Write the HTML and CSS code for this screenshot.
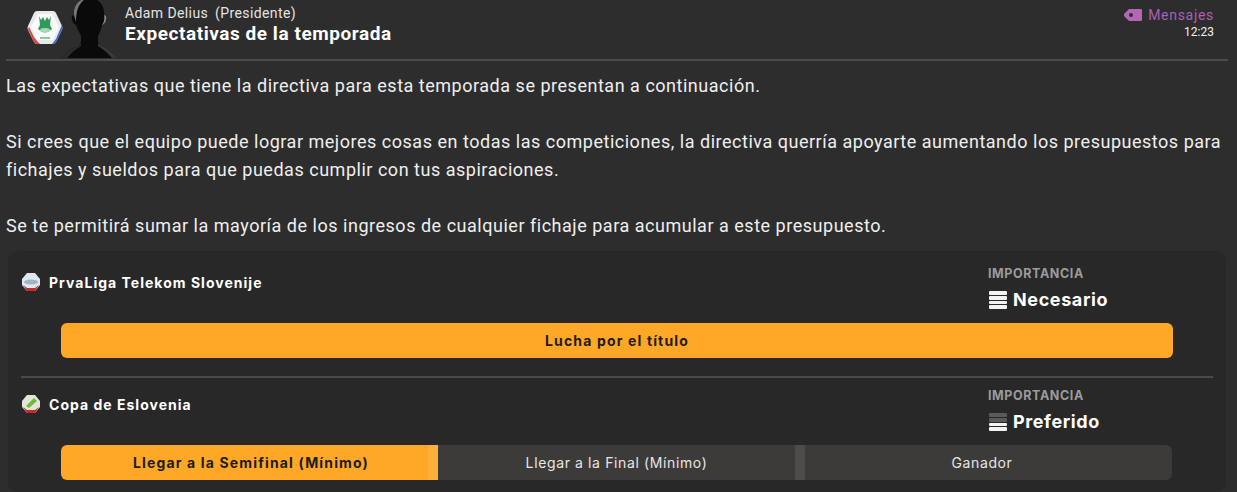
FILE: index.html
```html
<!DOCTYPE html>
<html lang="es">
<head>
    <meta charset="UTF-8">
    <title>Expectativas de la temporada</title>
    <link rel="stylesheet" href="styles.css">
</head>
<body>
    <header class="msg-header">
        <svg class="club-crest" width="36" height="35" viewBox="0 0 36 35">
            <path d="M10 1 H26 Q28 1 29 3 L35 16 Q36 18 35 20 L29 32 Q28 34 26 34 H10 Q8 34 7 32 L1 20 Q0 18 1 16 L7 3 Q8 1 10 1 Z" fill="#e8e9ea"/>
            <path d="M1 19 L7 32 Q8 34 10 34 H13 L10 31 L7 27 L2 17 Z" fill="#d4474c"/>
            <path d="M35 15 L29 29 L25 34 H26 Q28 34 29 32 L35 20 Q36 18 35 15 Z" fill="#3a68c4"/>
            <path d="M11 4 H25 L32 17 L26 30 H10 L4 17 Z" fill="#fafafa"/>
            <path d="M12 6 L14 10 L16 7 L18 11 L20 7 L22 10 L24 6 L23 15 L25 19 Q18 26 11 19 L13 15 Z" fill="#2f9a58"/>
            <ellipse cx="18" cy="20" rx="5" ry="2" fill="#a9d8b6"/>
            <rect x="13" y="27" width="10" height="2" fill="#8cc7a0"/>
        </svg>
        <svg class="manager-face" width="58" height="59" viewBox="0 0 58 59">
            <path d="M2 58 C8 51 13 48 19 45 L21 42 L21 36 C19 32 17 28 16 25 C13 24 11 20 12 16 L14 15 C13 6 19 -2 29 -2 C39 -2 45 6 44 15 L46 16 C47 20 45 24 42 25 C41 29 40 33 38 36 L38 42 L40 45 C46 48 51 51 57 58 Z" fill="#0a0a0a"/>
            <path d="M14 15 C13 6 19 -1 27 -2 C20 2 16 8 16 22 Z" fill="#777"/>
            <path d="M44 15 L46 16 C47 20 45 24 42 25 C44 22 45 19 44 15 Z" fill="#8a8a8a"/>
            <path d="M38 43 L40 45 C46 48 51 51 57 58 L52 58 C48 53 43 49 38 46 Z" fill="#3a3a3a"/>
            <path d="M21 43 L19 45 C13 48 8 51 2 58 L7 58 C11 53 16 49 21 46 Z" fill="#2c2c2c"/>
        </svg>
        <div class="msg-from">
            <div class="sender">Adam Delius <span class="role">(Presidente)</span></div>
            <h1 class="msg-title">Expectativas de la temporada</h1>
        </div>
        <div class="msg-meta">
            <div class="inbox-link">
                <svg width="18" height="12" viewBox="0 0 18 12"><path d="M5 0 H17 Q18 0 18 1 V11 Q18 12 17 12 H5 L0 7 V5 Z M7 4 A2 2 0 1 0 7 8 A2 2 0 1 0 7 4 Z" fill="#b565b5" fill-rule="evenodd"/></svg>
                <span>Mensajes</span>
            </div>
            <div class="msg-time">12:23</div>
        </div>
    </header>

    <div class="msg-body">
        <p>Las expectativas que tiene la directiva para esta temporada se presentan a continuación.</p>
        <p>Si crees que el equipo puede lograr mejores cosas en todas las competiciones, la directiva querría apoyarte aumentando los presupuestos para fichajes y sueldos para que puedas cumplir con tus aspiraciones.</p>
        <p>Se te permitirá sumar la mayoría de los ingresos de cualquier fichaje para acumular a este presupuesto.</p>
    </div>

    <section class="panel">
        <div class="comp">
            <div class="comp-top">
                <div class="comp-name">
                    <svg class="comp-logo" width="20" height="20" viewBox="0 0 20 20">
                        <path d="M6 1 H14 L19 7 V13 L14 19 H6 L1 13 V7 Z" fill="#dfe8f2"/>
                        <path d="M2 13 L6 19 H14 L18 13 L14 16 H6 Z" fill="#c8282c"/>
                        <ellipse cx="10" cy="10" rx="7" ry="2.5" fill="#9fb4c8"/>
                    </svg>
                    <span>PrvaLiga Telekom Slovenije</span>
                </div>
                <div class="importance">
                    <div class="imp-label">IMPORTANCIA</div>
                    <div class="imp-value">
                        <span class="imp-icon"><i></i><i></i><i></i><i></i></span>
                        <span>Necesario</span>
                    </div>
                </div>
            </div>
            <div class="goal-bar">
                <div class="goal on single">Lucha por el título</div>
            </div>
        </div>

        <div class="comp">
            <div class="comp-top">
                <div class="comp-name">
                    <svg class="comp-logo" width="20" height="20" viewBox="0 0 20 20">
                        <path d="M6 1 H14 L19 7 V13 L14 19 H6 L1 13 V7 Z" fill="#e0e6da"/>
                        <path d="M2 13 L6 19 H14 L18 13 L14 16 H6 Z" fill="#c8282c"/>
                        <path d="M5 12 L13 4 L16 7 L8 14 Z" fill="#74b82e"/>
                    </svg>
                    <span>Copa de Eslovenia</span>
                </div>
                <div class="importance">
                    <div class="imp-label">IMPORTANCIA</div>
                    <div class="imp-value">
                        <span class="imp-icon"><i class="dim"></i><i class="dim"></i><i></i><i></i></span>
                        <span>Preferido</span>
                    </div>
                </div>
            </div>
            <div class="goal-bar">
                <div class="goal on first">Llegar a la Semifinal (Mínimo)</div>
                <div class="goal mid">Llegar a la Final (Mínimo)</div>
                <div class="goal last">Ganador</div>
            </div>
        </div>
    </section>
</body>
</html>
```

FILE: styles.css
```css
html, body {
    height: 100%;
}
body {
    margin: 0;
    overflow: hidden;
    background-color: #2d2d2d;
    color: #f2f2f2;
    font-family: Roboto, "Liberation Sans", sans-serif;
}
.msg-header {
    display: flex;
    align-items: flex-start;
    height: 59px;
    margin: 0 9px 0 6px;
    padding-left: 21px;
    border-bottom: 2px solid #4c4c4c;
}
.club-crest {
    margin-top: 10px;
    flex: none;
}
.manager-face {
    margin-left: -3px;
    flex: none;
}
.msg-from {
    margin-left: 7px;
    padding-top: 4px;
    flex: 1;
}
.sender {
    font-size: 14px;
    line-height: 18px;
    letter-spacing: 0.4px;
    color: #e4e4e4;
}
.role {
    margin-left: 3px;
}
.msg-title {
    margin: 0;
    font-size: 19px;
    line-height: 24px;
    font-weight: 700;
    letter-spacing: 0.55px;
    color: #fff;
}
.msg-meta {
    margin-right: 14px;
    padding-top: 6px;
    text-align: right;
}
.inbox-link {
    display: flex;
    align-items: center;
    justify-content: flex-end;
    gap: 6px;
    font-size: 14px;
    line-height: 18px;
    letter-spacing: 0.7px;
    color: #a860b8;
}
.msg-time {
    font-size: 12px;
    line-height: 16px;
    color: #f0f0f0;
}
.msg-body {
    padding: 11px 6px 0;
    font-size: 18px;
    line-height: 28px;
    letter-spacing: 0.52px;
    color: #efefef;
}
.msg-body p {
    margin: 0 0 28px;
}
.msg-body p:last-child {
    margin-bottom: 0;
}
.panel {
    margin: 11px 11px 0 8px;
    padding: 5px 13px 12px;
    border-radius: 10px;
    background-color: #282828;
}
.comp {
    padding-bottom: 18px;
    border-bottom: 2px solid #4a4a4a;
}
.comp:last-child {
    border-bottom: none;
    padding-bottom: 0;
}
.comp-top {
    display: flex;
    justify-content: space-between;
    height: 67px;
    padding-top: 10px;
    box-sizing: border-box;
}
.comp-name {
    display: flex;
    align-items: center;
    gap: 8px;
    height: 20px;
    margin: 6px 0 0;
    font-family: Inter, sans-serif;
    font-size: 14px;
    font-weight: 700;
    letter-spacing: 1.02px;
    color: #fff;
}
.comp-logo {
    flex: none;
}
.importance {
    width: 225px;
}
.imp-label {
    font-family: Inter, sans-serif;
    font-size: 12.5px;
    line-height: 16px;
    font-weight: 700;
    letter-spacing: 0.6px;
    color: #9b9b9b;
}
.imp-value {
    display: flex;
    align-items: center;
    gap: 6px;
    margin-top: 6px;
    font-family: Inter, sans-serif;
    font-size: 18px;
    line-height: 24px;
    font-weight: 700;
    letter-spacing: 0.6px;
    color: #fff;
}
.imp-icon {
    display: flex;
    flex-direction: column;
    gap: 1px;
    width: 18px;
    margin-left: 1px;
}
.imp-icon i {
    display: block;
    height: 3.75px;
    border-radius: 1px;
    background-color: #f2f2f2;
}
.imp-icon i.dim {
    background-color: #5a5a5a;
}
.goal-bar {
    display: flex;
    height: 35px;
    margin: 0 40px;
}
.goal {
    display: flex;
    align-items: center;
    justify-content: center;
    box-sizing: border-box;
    flex: 0 0 367px;
    font-family: Inter, sans-serif;
    font-size: 14px;
    letter-spacing: 0.62px;
    background-color: #3c3b3a;
    color: #e6e6e6;
}
.goal.on {
    background-color: #ffa726;
    color: #1c1c1c;
    font-weight: 700;
    letter-spacing: 1.15px;
}
.goal.single {
    flex: 1;
    border-radius: 6px;
}
.goal.first {
    flex-basis: 377px;
    padding-left: 13px;
    border-radius: 6px 0 0 6px;
    border-right: 10px solid #ffb03a;
}
.goal.mid {
    border-right: 10px solid #4c4c4b;
}
.goal.last {
    padding-right: 13px;
    border-radius: 0 6px 6px 0;
}
```
